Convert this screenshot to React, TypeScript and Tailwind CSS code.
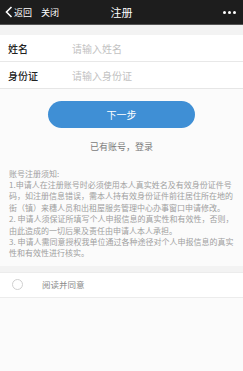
import React from 'react'

const font = { fontFamily: '"Noto Sans CJK SC", "Noto Sans", sans-serif' }

const notes = [
  '账号注册须知:',
  '1.申请人在注册账号时必须使用本人真实姓名及有效身份证件号',
  '码，如注册信息错误，需本人持有效身份证件前往居住所在地的',
  '街（镇）来穗人员和出租屋服务管理中心办事窗口申请修改。',
  '2. 申请人须保证所填写个人申报信息的真实性和有效性，否则，',
  '由此造成的一切后果及责任由申请人本人承担。',
  '3. 申请人需同意授权我单位通过各种途径对个人申报信息的真实',
  '性和有效性进行核实。',
]

export default function App() {
  return (
    <div className="w-[243px] h-[371px] bg-[#fbfbfb] overflow-hidden" style={font}>
      {/* 顶部栏 */}
      <div className="h-[25px] bg-[#1d1d1d] border-b border-[#555] flex items-center px-[5px] text-white relative">
        <div className="flex items-center gap-[1px]">
          <svg width="8" height="12" viewBox="0 0 8 12">
            <path d="M6.5 1 L1.5 6 L6.5 11" stroke="#fff" strokeWidth="1.6" fill="none" />
          </svg>
          <span className="text-[9px] leading-none">返回</span>
          <span className="text-[9px] leading-none ml-[8px]">关闭</span>
        </div>
        <div className="absolute left-0 right-0 text-center text-[11px] leading-none pointer-events-none">注册</div>
        <div className="ml-auto flex gap-[2px] pr-[2px]">
          <span className="w-[3px] h-[3px] rounded-full bg-white" />
          <span className="w-[3px] h-[3px] rounded-full bg-white" />
          <span className="w-[3px] h-[3px] rounded-full bg-white" />
        </div>
      </div>

      <div className="h-[10px] bg-[#f3f3f3]" />

      {/* 表单 */}
      <div className="bg-white border-b border-[#e6e6e6]">
        <div className="h-[27px] flex items-center border-b border-[#e8e8e8] pl-[8px]">
          <span className="w-[64px] text-[10px] font-medium text-[#222]">姓名</span>
          <span className="text-[10px] text-[#c2c2c2]">请输入姓名</span>
        </div>
        <div className="h-[26px] flex items-center pl-[8px]">
          <span className="w-[64px] text-[10px] font-medium text-[#222]">身份证</span>
          <span className="text-[10px] text-[#c2c2c2]">请输入身份证</span>
        </div>
      </div>

      <div className="flex justify-center mt-[12px]">
        <button className="w-[147px] h-[27px] rounded-full bg-[#3f8fd5] text-white text-[10px]">下一步</button>
      </div>

      <div className="text-center text-[9px] text-[#7a7a7a] mt-[12px]">已有账号，登录</div>

      {/* 须知 */}
      <div className="px-[9px] mt-[14px] text-[8px] leading-[11.4px] text-[#a0a0a0]">
        {notes.map((l, i) => (
          <div key={i} className="whitespace-nowrap">{l}</div>
        ))}
      </div>

      <div className="h-[6px] bg-[#f3f3f3] mt-[7px]" />
      <div className="h-[26px] bg-white border-y border-[#ececec] flex items-center pl-[12px]">
        <span className="w-[11px] h-[11px] rounded-full border border-[#d0d0d0]" />
        <span className="ml-[19px] text-[8.5px] text-[#8a8a8a]">阅读并同意</span>
      </div>
    </div>
  )
}
